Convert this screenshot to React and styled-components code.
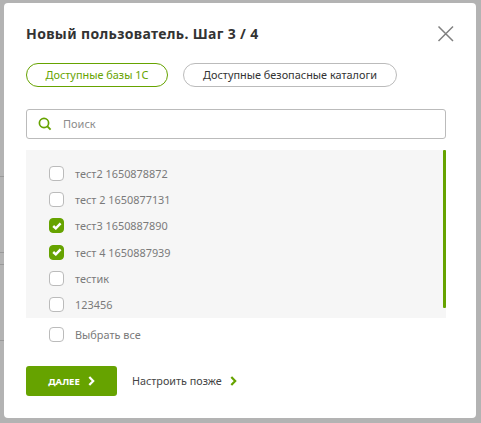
import React, { useState } from 'react';
import styled, { createGlobalStyle } from 'styled-components';

const green = '#66a300';

const Global = createGlobalStyle`
  html, body {
    margin: 0;
    padding: 0;
  }
  body {
    width: 481px;
    height: 423px;
    overflow: hidden;
    background: #b3b3b3;
    font-family: "Noto Sans", "Open Sans", sans-serif;
  }
`;

// the page behind the dimmed overlay only shows as a few table lines on the left
const Overlay = styled.div`
  box-sizing: border-box;
  width: 481px;
  height: 423px;
  padding: 3px 5px 5px 4px;
  background:
    linear-gradient(#999, #999) 0 176px / 4px 1px no-repeat,
    linear-gradient(#999, #999) 0 252px / 4px 1px no-repeat,
    linear-gradient(#999, #999) 0 264px / 4px 1px no-repeat,
    linear-gradient(#999, #999) 0 340px / 4px 1px no-repeat;
`;

const Modal = styled.div`
  box-sizing: border-box;
  height: 415px;
  padding: 22px 30px 0 22px;
  background: #fff;
  border-radius: 4px;
  display: flex;
  flex-direction: column;
`;

const Header = styled.div`
  display: flex;
  align-items: center;
  justify-content: space-between;
  height: 18px;
`;

const Title = styled.h2`
  margin: 0;
  font-size: 14px;
  line-height: 18px;
  font-weight: 700;
  color: #333;
  letter-spacing: 0.35px;
`;

const CloseButton = styled.button`
  margin: 0 -9px 0 0;
  padding: 0;
  width: 18px;
  height: 18px;
  border: 0;
  background: none;
  display: block;
`;

const Tabs = styled.div`
  display: flex;
  gap: 15px;
  margin-top: 20px;
`;

const Tab = styled.button`
  box-sizing: border-box;
  height: 24px;
  width: ${p => p.$width}px;
  padding: 0;
  border-radius: 12px;
  border: 1px solid ${p => (p.$active ? green : '#bbb')};
  background: #fff;
  color: ${p => (p.$active ? green : '#333')};
  font-family: inherit;
  font-size: 10.9px;
  line-height: 22px;
`;

const SearchBox = styled.label`
  box-sizing: border-box;
  display: flex;
  align-items: center;
  height: 30px;
  margin-top: 22px;
  width: 420px;
  padding: 0 0 1px 11px;
  border: 1px solid #bbb;
  border-radius: 3px;
`;

const SearchInput = styled.input`
  flex: 1;
  min-width: 0;
  margin-left: 11px;
  padding: 0;
  border: 0;
  outline: 0;
  font-family: inherit;
  font-size: 11px;
  color: #333;
  &::placeholder {
    color: #8c8c8c;
    opacity: 1;
  }
`;

const ListPanel = styled.div`
  position: relative;
  box-sizing: border-box;
  width: 420px;
  height: 168px;
  margin-top: 11px;
  padding: 10.5px 0 0 23px;
  background: #f6f6f6;
`;

const ScrollThumb = styled.div`
  position: absolute;
  top: 0;
  right: 0;
  width: 3px;
  height: 158px;
  background: ${green};
  border-radius: 1px;
`;

const Row = styled.label`
  display: flex;
  align-items: center;
  gap: 11px;
  height: 26.2px;
  font-size: 10.9px;
  color: #7a7a7a;
`;

const SelectAllRow = styled(Row)`
  margin: 3.5px 0 0 23px;
`;

const Box = styled.span`
  box-sizing: border-box;
  flex: none;
  width: 15px;
  height: 15px;
  border-radius: 4px;
  border: 1px solid ${p => (p.$checked ? green : '#bbb')};
  background: ${p => (p.$checked ? green : '#fff')};
  display: flex;
  align-items: center;
  justify-content: center;
`;

const Footer = styled.div`
  display: flex;
  align-items: center;
  margin-top: 18.5px;
`;

const NextButton = styled.button`
  display: flex;
  align-items: center;
  justify-content: center;
  gap: 8px;
  width: 91px;
  height: 30px;
  padding: 0;
  border: 0;
  border-radius: 3px;
  background: ${green};
  color: #fff;
  font-family: inherit;
  font-size: 9.5px;
  font-weight: 700;
`;

const LaterLink = styled.a`
  display: flex;
  align-items: center;
  gap: 8px;
  margin: -1px 0 0 15px;
  font-size: 10.8px;
  color: #444;
`;

const Chevron = ({ color }) => (
  <svg width="7" height="10" viewBox="0 0 7 10" fill="none">
    <path d="M1.3 1 L5.2 5 L1.3 9" stroke={color} strokeWidth="2.2" />
  </svg>
);

const items = [
  { name: 'тест2 1650878872', checked: false },
  { name: 'тест 2 1650877131', checked: false },
  { name: 'тест3 1650887890', checked: true },
  { name: 'тест 4 1650887939', checked: true },
  { name: 'тестик', checked: false },
  { name: '123456', checked: false },
];

const Check = ({ checked }) => (
  <Box $checked={checked}>
    {checked && (
      <svg width="10" height="8" viewBox="0 0 10 8" fill="none">
        <path d="M1.2 4 L3.8 6.4 L8.6 1.4" stroke="#fff" strokeWidth="2.4" />
      </svg>
    )}
  </Box>
);

export default function App() {
  const [query, setQuery] = useState('');

  return (
    <Overlay>
      <Global />
      <Modal>
        <Header>
          <Title>Новый пользователь. Шаг 3 / 4</Title>
          <CloseButton aria-label="Закрыть">
            <svg width="18" height="18" viewBox="0 0 18 18" fill="none">
              <path d="M1.5 1.5 L16 16 M16 1.5 L1.5 16" stroke="#808080" strokeWidth="1.5" />
            </svg>
          </CloseButton>
        </Header>
        <Tabs>
          <Tab $active $width={142}>Доступные базы 1С</Tab>
          <Tab $width={214}>Доступные безопасные каталоги</Tab>
        </Tabs>
        <SearchBox>
          <svg width="14" height="14" viewBox="0 0 14 14" fill="none">
            <circle cx="6" cy="6" r="4.6" stroke={green} strokeWidth="1.7" />
            <path d="M9.4 9.4 L12.6 12.6" stroke={green} strokeWidth="1.9" />
          </svg>
          <SearchInput
            placeholder="Поиск"
            value={query}
            onChange={e => setQuery(e.target.value)}
          />
        </SearchBox>
        <ListPanel>
          <ScrollThumb />
          {items.map(item => (
            <Row key={item.name}>
              <Check checked={item.checked} />
              {item.name}
            </Row>
          ))}
        </ListPanel>
        <SelectAllRow>
          <Check checked={false} />
          Выбрать все
        </SelectAllRow>
        <Footer>
          <NextButton>
            ДАЛЕЕ
            <Chevron color="#fff" />
          </NextButton>
          <LaterLink>
            Настроить позже
            <Chevron color={green} />
          </LaterLink>
        </Footer>
      </Modal>
    </Overlay>
  );
}
